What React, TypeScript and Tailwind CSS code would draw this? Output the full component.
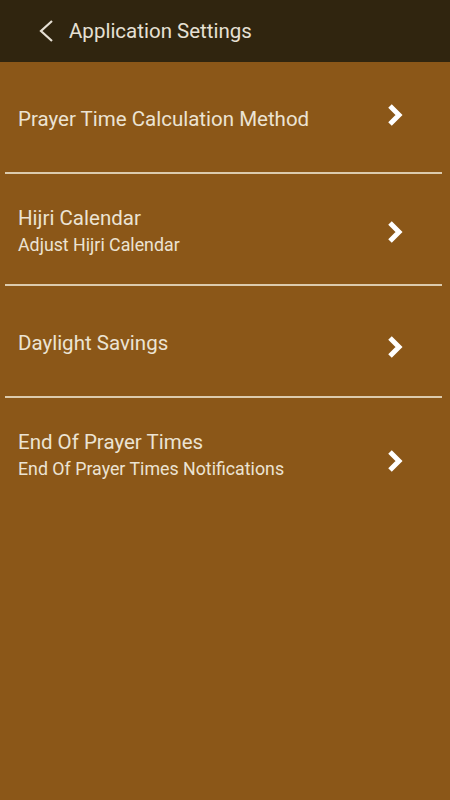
import { ReactNode } from "react";

const Chevron = ({ shift }: { shift: string }) => (
	<svg width="18" height="24" viewBox="0 0 18 24" className={`shrink-0 ${shift}`}>
		<polyline points="4,3 13,12 4,21" fill="none" stroke="#ffffff" strokeWidth="5" strokeLinejoin="miter" />
	</svg>
);

const Row = ({ title, sub, shift }: { title: string; sub?: ReactNode; shift: string }) => (
	<div className="flex h-[110px] items-center justify-between pl-[18px] pr-[46px]">
		<div className="mt-[4px] flex flex-col">
			<span className="text-[20.5px] leading-[27px] text-[#ebe3d3]">{title}</span>
			{sub && <span className="text-[17.8px] leading-[25px] text-[#ebe3d3]">{sub}</span>}
		</div>
		<Chevron shift={shift} />
	</div>
);

const Divider = () => <div className="ml-[5px] mr-[8px] h-[2px] bg-[#dccbad]" />;

export default function App() {
	return (
		<div className="flex h-[800px] w-[450px] flex-col bg-[#8b5718]" style={{ fontFamily: "Roboto, sans-serif" }}>
			<header className="flex h-[62px] items-center gap-[14px] bg-[#30250f] pl-[37px]">
				<svg width="18" height="24" viewBox="0 0 18 24">
					<polyline points="15,2 4,12 15,22" fill="none" stroke="#e6e0d4" strokeWidth="2.2" />
				</svg>
				<span className="text-[20.5px] text-[#e6e0d4]">Application Settings</span>
			</header>

			<Row title="Prayer Time Calculation Method" shift="mb-[5px]" />
			<Divider />
			<Row title="Hijri Calendar" sub="Adjust Hijri Calendar" shift="mt-[5px]" />
			<Divider />
			<Row title="Daylight Savings" shift="mt-[11px]" />
			<Divider />
			<Row title="End Of Prayer Times" sub="End Of Prayer Times Notifications" shift="mt-[15px]" />
		</div>
	);
}
